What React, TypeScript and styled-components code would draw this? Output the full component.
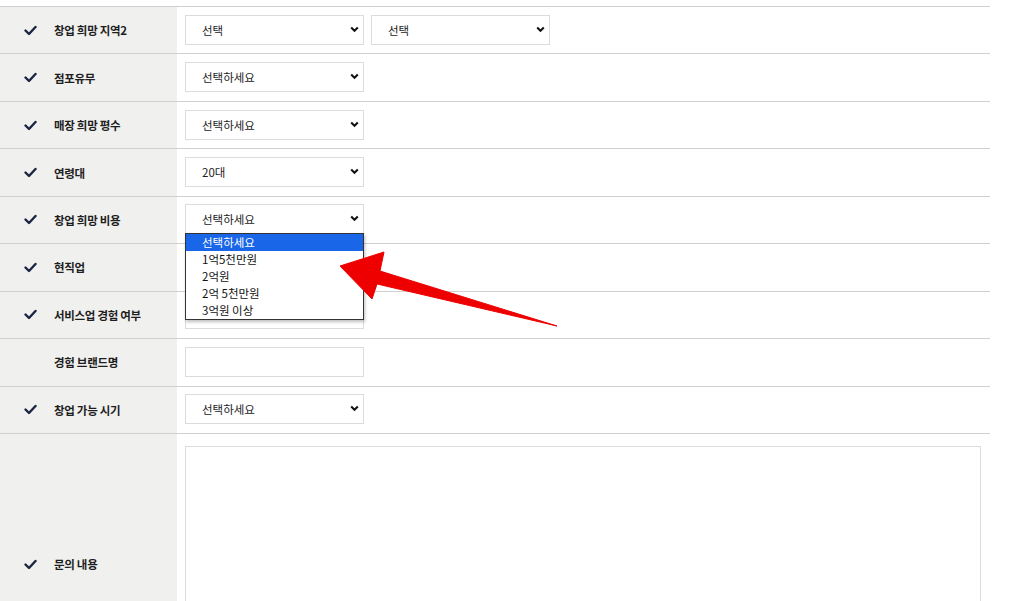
import React, { FC } from 'react';
import styled, { createGlobalStyle } from 'styled-components';

const GlobalStyle = createGlobalStyle`
  html, body {
    margin: 0;
    padding: 0;
    background: #ffffff;
    font-family: "Noto Sans CJK KR", "Noto Sans", sans-serif;
    overflow: hidden;
  }
`;

const Page = styled.div`
  position: relative;
  width: 1024px;
  height: 601px;
  overflow: hidden;
  padding-top: 6px;
  box-sizing: border-box;
`;

const Form = styled.div`
  width: 990px;
  border-top: 1px solid #d0d0d0;
`;

const Row = styled.div<{ $tall?: boolean }>`
  display: grid;
  grid-template-columns: 177px 1fr;
  height: ${(p) => (p.$tall ? 'auto' : '47.44px')};
  box-sizing: border-box;
  border-bottom: 1px solid #d0d0d0;
`;

const LabelCell = styled.div`
  display: flex;
  align-items: center;
  background: #f0f0ef;
  padding-left: 24px;
  gap: 17px;
  font-size: 11.5px;
  font-weight: 700;
  color: #1e1e1e;
  letter-spacing: -0.3px;
`;

const CheckSlot = styled.span`
  display: inline-flex;
  width: 13px;
  height: 13px;
`;

const FieldCell = styled.div<{ $tall?: boolean }>`
  display: flex;
  align-items: ${(p) => (p.$tall ? 'flex-start' : 'center')};
  gap: 7px;
  padding: ${(p) => (p.$tall ? '12px 9px 13px 8px' : '0 0 1px 8px')};
`;

const SelectWrap = styled.div`
  position: relative;
  width: 179px;
  height: 30px;
`;

const NativeSelect = styled.select`
  appearance: none;
  width: 100%;
  height: 100%;
  box-sizing: border-box;
  border: 1px solid #dcdcdc;
  background: #ffffff;
  padding: 0 24px 0 16px;
  font-family: "Noto Sans CJK KR", "Noto Sans", sans-serif;
  font-size: 11.5px;
  color: #222;
  outline: none;
`;

const Chevron = styled.svg`
  position: absolute;
  right: 5px;
  top: 11px;
  width: 9px;
  height: 7px;
  pointer-events: none;
`;

const TextInput = styled.input`
  width: 179px;
  height: 30px;
  box-sizing: border-box;
  border: 1px solid #dcdcdc;
  background: #fff;
  outline: none;
`;

const TextArea = styled.textarea`
  width: 100%;
  height: 236px;
  box-sizing: border-box;
  border: 1px solid #dcdcdc;
  background: #fff;
  resize: none;
  outline: none;
`;

const DropList = styled.ul`
  position: absolute;
  z-index: 10;
  left: 0;
  top: 29px;
  width: 179px;
  margin: 0;
  padding: 0;
  list-style: none;
  box-sizing: border-box;
  border: 1px solid #333;
  background: #fff;
  box-shadow: 1px 2px 3px rgba(0, 0, 0, 0.25);
`;

const DropItem = styled.li<{ $active?: boolean }>`
  height: 17px;
  line-height: 17px;
  padding-left: 16px;
  font-size: 11.5px;
  color: ${(p) => (p.$active ? '#ffffff' : '#111')};
  background: ${(p) => (p.$active ? '#1a66e8' : 'transparent')};
`;

const ArrowLayer = styled.svg`
  position: absolute;
  left: 0;
  top: 0;
  width: 1024px;
  height: 601px;
  pointer-events: none;
  z-index: 20;
`;

const Check: FC = () => (
  <svg width="13" height="13" viewBox="0 0 13 13">
    <polyline
      points="1.5,6.5 5,10 11.5,3"
      fill="none"
      stroke="#1b2442"
      strokeWidth="2.4"
      strokeLinecap="round"
      strokeLinejoin="round"
    />
  </svg>
);

const Select: FC<{ value: string; options?: string[]; open?: boolean }> = ({ value, options, open }) => (
  <SelectWrap>
    <NativeSelect defaultValue={value}>
      <option>{value}</option>
    </NativeSelect>
    <Chevron viewBox="0 0 9 7">
      <polyline points="1.2,1.5 4.5,4.8 7.8,1.5" fill="none" stroke="#111" strokeWidth="2" />
    </Chevron>
    {open && options && (
      <DropList>
        {options.map((o, i) => (
          <DropItem key={o} $active={i === 0}>{o}</DropItem>
        ))}
      </DropList>
    )}
  </SelectWrap>
);

const costOptions = ['선택하세요', '1억5천만원', '2억원', '2억 5천만원', '3억원 이상'];

const Label: FC<{ text: string; required?: boolean }> = ({ text, required = true }) => (
  <LabelCell>
    <CheckSlot>{required && <Check />}</CheckSlot>
    {text}
  </LabelCell>
);

const App: FC = () => {
  return (
    <Page>
      <GlobalStyle />
      <Form>
        <Row>
          <Label text="창업 희망 지역2" />
          <FieldCell>
            <Select value="선택" />
            <Select value="선택" />
          </FieldCell>
        </Row>
        <Row>
          <Label text="점포유무" />
          <FieldCell><Select value="선택하세요" /></FieldCell>
        </Row>
        <Row>
          <Label text="매장 희망 평수" />
          <FieldCell><Select value="선택하세요" /></FieldCell>
        </Row>
        <Row>
          <Label text="연령대" />
          <FieldCell><Select value="20대" /></FieldCell>
        </Row>
        <Row>
          <Label text="창업 희망 비용" />
          <FieldCell><Select value="선택하세요" options={costOptions} open /></FieldCell>
        </Row>
        <Row>
          <Label text="현직업" />
          <FieldCell><Select value="선택하세요" /></FieldCell>
        </Row>
        <Row>
          <Label text="서비스업 경험 여부" />
          <FieldCell><Select value="선택하세요" /></FieldCell>
        </Row>
        <Row>
          <Label text="경험 브랜드명" required={false} />
          <FieldCell><TextInput type="text" /></FieldCell>
        </Row>
        <Row>
          <Label text="창업 가능 시기" />
          <FieldCell><Select value="선택하세요" /></FieldCell>
        </Row>
        <Row $tall>
          <Label text="문의 내용" />
          <FieldCell $tall><TextArea /></FieldCell>
        </Row>
      </Form>
      <ArrowLayer viewBox="0 0 1024 601">
        <polygon
          points="340,266 384,252 380,271 557,326 377,284 372,299"
          fill="#ee0000"
          stroke="#ee0000"
          strokeWidth="1"
          strokeLinejoin="round"
        />
      </ArrowLayer>
    </Page>
  );
};

export default App;
